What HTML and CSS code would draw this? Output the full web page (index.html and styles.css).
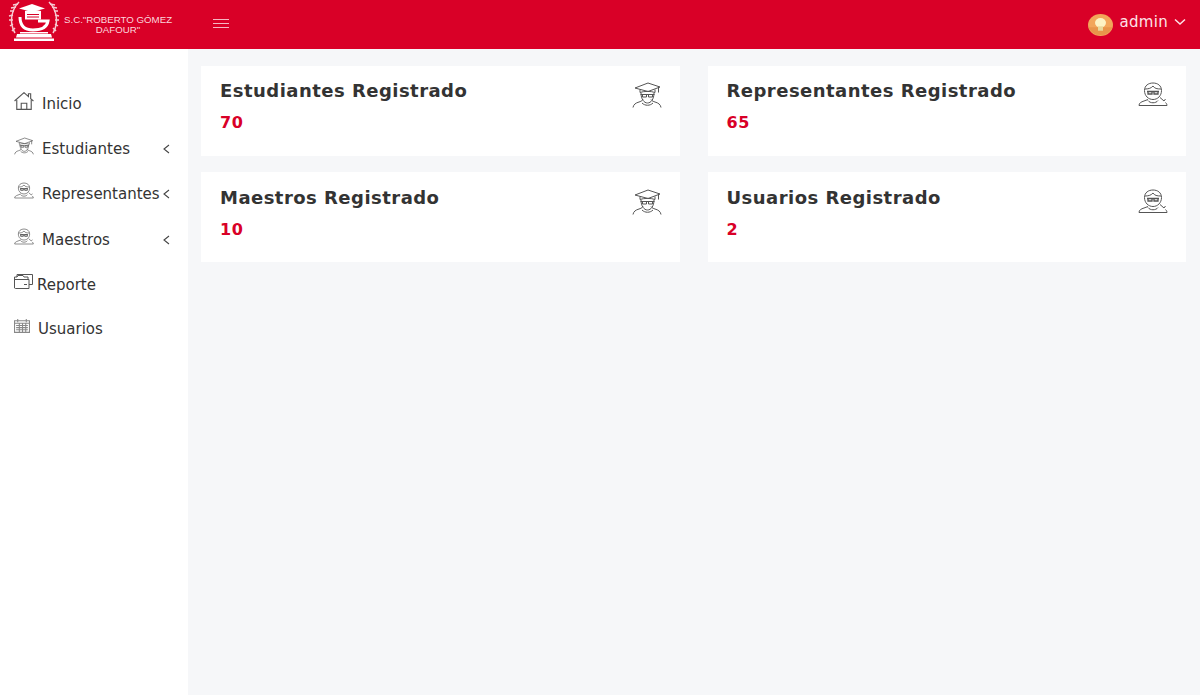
FILE: index.html
```html
<!DOCTYPE html>
<html lang="en">

<head>
    <meta charset="UTF-8">
    <meta name="viewport" content="width=device-width, initial-scale=1.0">
    <title>Panel</title>
    <link rel="stylesheet" href="styles.css">
</head>

<body>
    <svg class="defs" width="0" height="0">
        <symbol id="i-grad" viewBox="0 0 30 26">
            <path d="M3 6 16 1l12 4-12 4.500z" />
            <path d="M8 7.500v3c4-1.500 11-1.500 15 0v-3M26.500 5v5.500" stroke-width="1.500" />
            <path d="M9 11c0 6 3 10 6.500 10s6.500-4 6.500-10" />
            <path d="M8.500 12.500h14M10.500 12.500h4v2.500h-4zM16.500 12.500h4v2.500h-4z" stroke-width="1.300" />
            <path d="M1 25.500c.5-3 2.500-4.500 6-5.500 1.500-.5 3-1 4-2.500M29 25.500c-.5-3-2.500-4.500-6-5.500-1.500-.5-3-1-4-2.500M10 21c3 3 8 3 11 0" />
        </symbol>
        <symbol id="i-rep" viewBox="0 0 30 26">
            <path d="M6.500 8.500C6.500 3.500 10.500 1 15 1s8.500 2.500 8.500 7.500c0 5.500-4 9-8.500 9s-8.500-3.500-8.500-9z" />
            <path d="M7 7c3 0 6-.5 8-3 1.500 2.500 4 3 8 3" />
            <path class="glasses" d="M9 9.500h12M10 9.500h4v2.500h-4zM16 9.500h4v2.500h-4z" />
            <path d="M1 23.500c0-2.500 2-3.500 5-4.500l4-1.500M29 23.500c0-1-.5-2-1.500-3M22 15.500l4 3.500 1.500-2M1 23.500h28M10 18.500c2 3 8 3 10 0" />
        </symbol>
        <symbol id="i-home" viewBox="0 0 18 16">
            <path d="M.5 8 9 .5l4 3.500V1.500h2V6l2.500 2" />
            <path d="M2.500 7v8.500h13V7M6.500 15.500V10h5v5.500" />
        </symbol>
        <symbol id="i-folder" viewBox="0 0 19 15">
            <path d="M.5 14V3H3l1-1.500h5L10 3h4v2.500M.5 5.500H15v9H1.500c-.6 0-1-.4-1-.5zM3 3V.5h15.500v10H15M10 10.500h3" />
        </symbol>
        <symbol id="i-cal" viewBox="0 0 15 13">
            <path class="soft" d="M.5 1.500h14v11H.5zM.5 4h14M3.500 0v3M11.500 0v3M2 6h11M2 8h11M2 10h11M5 4v8M8 4v8M11 4v8" />
        </symbol>
        <symbol id="i-chev-left" viewBox="0 0 7 10">
            <path class="strong" d="M6 1 1 5l5 4" />
        </symbol>
    </svg>

    <header class="topbar">
        <div class="brand">
            <svg class="logo" viewBox="0 0 52 41">
                <g class="laurel">
                    <path d="M11 1C3 9 1 22 7 32M41 1c8 8 10 21 4 31" />
                    <path d="M10 3 5 4M8 6 3 7M6 10H2M5 14 1 15M5 19H1M5 23l-3 2M7 27l-3 3M42 3l5 1M44 6l5 1M46 10h4M47 14l4 1M47 19h4M47 23l3 2M45 27l3 3" />
                </g>
                <path class="solid" d="M24 3 37 7.500 24 11 11 7.500z" />
                <path class="solid" d="M17 10c5-1.500 11-1.500 16 0v8.500H17z" />
                <path class="cut" d="M19 13.500h12M19 16h12" />
                <path class="ring" d="M12 16c0 9 5 13 13 13 8 0 14-3 15-9H30" />
                <path class="solid" d="M12 31h28v1.500H12zM9 33h34l1 3.500H8zM6 37.500h40V40H6z" />
            </svg>
            <div class="brand-name">S.C."ROBERTO GÓMEZ<br>DAFOUR"</div>
        </div>
        <button class="burger"><span></span><span></span><span></span></button>
        <div class="user">
            <svg class="avatar" viewBox="0 0 25 25" preserveAspectRatio="none">
                <circle cx="12.500" cy="12.500" r="12.500" fill="#f2a65a" />
                <path d="M0.500 15h24a12.500 12.500 0 0 1-24 0z" fill="#e8954a" />
                <circle cx="12.500" cy="10" r="5.500" fill="#fdf3c4" />
                <rect x="10" y="14" width="5" height="5" fill="#e9d89a" />
            </svg>
            <span class="user-name">admin</span>
            <svg class="caret" viewBox="0 0 12 8"><path d="M1 1.500 6 6l5-4.500" /></svg>
        </div>
    </header>

    <div class="layout">
        <nav class="sidebar">
            <a class="nav-item"><svg class="nav-icon home"><use href="#i-home" /></svg>Inicio</a>
            <a class="nav-item"><svg class="nav-icon"><use href="#i-grad" /></svg>Estudiantes<svg class="chev"><use href="#i-chev-left" /></svg></a>
            <a class="nav-item"><svg class="nav-icon"><use href="#i-rep" /></svg>Representantes<svg class="chev"><use href="#i-chev-left" /></svg></a>
            <a class="nav-item"><svg class="nav-icon"><use href="#i-rep" /></svg>Maestros<svg class="chev"><use href="#i-chev-left" /></svg></a>
            <a class="nav-item tight"><svg class="nav-icon"><use href="#i-folder" /></svg>Reporte</a>
            <a class="nav-item small-icon"><svg class="nav-icon"><use href="#i-cal" /></svg>Usuarios</a>
        </nav>

        <main class="content">
            <div class="card">
                <div>
                    <div class="card-title">Estudiantes Registrado</div>
                    <div class="card-num">70</div>
                </div>
                <svg class="card-icon"><use href="#i-grad" /></svg>
            </div>
            <div class="card">
                <div>
                    <div class="card-title">Representantes Registrado</div>
                    <div class="card-num">65</div>
                </div>
                <svg class="card-icon"><use href="#i-rep" /></svg>
            </div>
            <div class="card">
                <div>
                    <div class="card-title">Maestros Registrado</div>
                    <div class="card-num">10</div>
                </div>
                <svg class="card-icon"><use href="#i-grad" /></svg>
            </div>
            <div class="card">
                <div>
                    <div class="card-title">Usuarios Registrado</div>
                    <div class="card-num">2</div>
                </div>
                <svg class="card-icon"><use href="#i-rep" /></svg>
            </div>
        </main>
    </div>
</body>

</html>
```
FILE: styles.css
```css
* {
    box-sizing: border-box;
}

body {
    margin: 0;
    height: 695px;
    overflow: hidden;
    font-family: "DejaVu Sans", sans-serif;
    background-color: #f6f7f9;
    color: #333;
}

.defs {
    display: block;
    height: 0;
}

symbol path {
    fill: none;
    stroke: #555;
    stroke-width: 1;
}

symbol path.glasses {
    stroke-width: 1.300;
}

symbol path.soft {
    stroke: #888;
}

symbol path.strong {
    stroke: #444;
    stroke-width: 1.100;
}

.topbar {
    display: flex;
    align-items: center;
    height: 49px;
    background-color: #d90027;
    color: #fff;
    padding-right: 14px;
}

.brand {
    display: flex;
    align-items: center;
    width: 213px;
    padding-left: 8px;
}

.logo {
    width: 52px;
    height: 41px;
    flex-shrink: 0;
    margin-top: -6px;
}

.logo .laurel path {
    fill: none;
    stroke: #f7c9d2;
    stroke-width: 1.500;
}

.logo .ring {
    fill: none;
    stroke: #fff;
    stroke-width: 3;
}

.logo .cut {
    fill: none;
    stroke: #d90027;
    stroke-width: 1;
}

.logo .solid {
    fill: #fff;
}

.brand-name {
    margin-left: 4px;
    font-family: "Liberation Sans", sans-serif;
    font-size: 9.700px;
    line-height: 10px;
    text-align: center;
    color: #fbd5dc;
    white-space: nowrap;
}

.burger {
    display: flex;
    flex-direction: column;
    gap: 3px;
    width: 16px;
    margin-top: -3px;
    padding: 0;
    border: 0;
    background: none;
}

.burger span {
    display: block;
    height: 1px;
    width: 100%;
    background-color: #f6b6c2;
}

.user {
    display: flex;
    align-items: center;
    margin-left: auto;
    font-size: 15px;
    letter-spacing: 0.3px;
    color: #fde3e8;
}

.avatar {
    width: 25px;
    height: 22px;
    margin-right: 7px;
}

.user-name {
    margin-top: -5px;
}

.caret {
    width: 12px;
    height: 8px;
    margin-left: 6px;
    margin-top: -5px;
    fill: none;
    stroke: #fde3e8;
    stroke-width: 1.500;
}

.layout {
    display: flex;
    height: 646px;
}

.sidebar {
    width: 188px;
    flex-shrink: 0;
    background-color: #fff;
    padding-top: 32px;
}

.nav-item {
    display: flex;
    align-items: center;
    height: 45.300px;
    padding: 0 18px 0 14px;
    font-size: 15px;
    color: #333;
    white-space: nowrap;
}

.nav-icon {
    width: 20px;
    height: 18px;
    margin-right: 8px;
    margin-top: -6px;
    flex-shrink: 0;
}

.tight .nav-icon {
    width: 19px;
    height: 15px;
    margin-right: 4px;
}

.small-icon {
    margin-top: -1px;
}

.small-icon .nav-icon {
    width: 16px;
    height: 14px;
    margin-right: 8px;
}

.chev {
    width: 7px;
    height: 10px;
    margin-left: auto;
    flex-shrink: 0;
}

.content {
    flex: 1;
    display: grid;
    grid-template-columns: 1fr 1fr;
    grid-auto-rows: 90px;
    gap: 16.300px 28px;
    padding: 17px 14px 0 13px;
}

.card {
    display: flex;
    justify-content: space-between;
    background-color: #fff;
    padding: 13.300px 18px 0 19px;
}

.card-title {
    font-size: 18px;
    font-weight: 700;
    line-height: 24px;
    letter-spacing: 0.470px;
}

.card-num {
    margin-top: 10px;
    font-size: 16px;
    font-weight: 700;
    line-height: 20px;
    letter-spacing: 0.500px;
    color: #d90027;
}

.card-icon {
    width: 30px;
    height: 26px;
    margin-top: 3px;
}
```
